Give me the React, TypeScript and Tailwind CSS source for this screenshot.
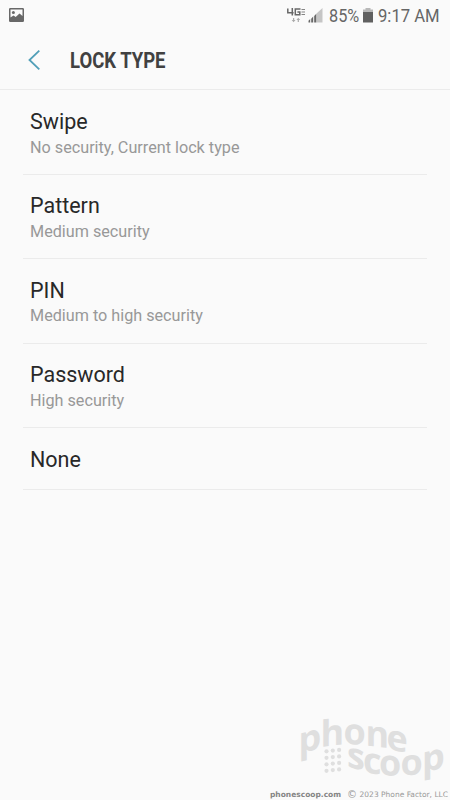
interface LockOption {
  title: string;
  summary?: string;
}

const OPTIONS: LockOption[] = [
  { title: "Swipe", summary: "No security, Current lock type" },
  { title: "Pattern", summary: "Medium security" },
  { title: "PIN", summary: "Medium to high security" },
  { title: "Password", summary: "High security" },
  { title: "None" },
];

// each letter sits on its own slanted baseline
const LOGO_LETTERS = [
  { char: "p", x: 298.5, y: 753.5, skew: -13 },
  { char: "h", x: 320.5, y: 747, skew: -7 },
  { char: "o", x: 343.5, y: 744, skew: 2 },
  { char: "n", x: 365.5, y: 745.5, skew: 6 },
  { char: "e", x: 386.5, y: 749, skew: 11 },
  { char: "s", x: 347, y: 766.5, skew: 14 },
  { char: "c", x: 363, y: 772, skew: 9 },
  { char: "o", x: 379, y: 775, skew: 3 },
  { char: "o", x: 400.5, y: 775.5, skew: -3 },
  { char: "p", x: 422, y: 772.5, skew: -12 },
];

function StatusBar() {
  return (
    <div className="flex h-8 items-center pl-[9px] text-[18.5px] leading-8 text-[#666]">
      <svg className="-mt-0.5 h-[14px] w-[15px]" viewBox="0 0 15 14">
        <path
          fill="#686868"
          fillRule="evenodd"
          d="M1.3 0h12.4Q15 0 15 1.3v11.4Q15 14 13.7 14H1.3Q0 14 0 12.7V1.3Q0 0 1.3 0ZM1.5 1.5V9.5l3-2 2.2 1.5 3.8-3.5 3 2.5v-6.5Z"
        />
        <circle cx="4.4" cy="4.4" r="1.5" fill="#686868" />
      </svg>
      <svg className="ml-[263px] h-8 w-[36px] shrink-0" viewBox="287 0 36 32">
        <path
          fill="none"
          stroke="#686868"
          strokeWidth="1.5"
          d="M287.8 8.5v4.2h5.8M292.3 8v7.5M300.5 9h-5.2v5.7h4.5v-2.6h-2.4"
        />
        <path fill="none" stroke="#858585" d="M301.5 9.5h3.5M301.5 12h3.5M301.5 14.5h3.5" />
        <path fill="#aaa" d="M293 18h1.2v2h1.3l-1.9 2.2-1.9-2.2h1.3ZM297.7 22h1.2v-2h1.3l-1.9-2.2-1.9 2.2h1.3Z" />
        <path fill="#c5c5c5" d="M316.5 13.5l6-5.5v14.5h-6Z" />
        <path fill="#686868" d="M308.5 20.8l1.7-1.8v3.5h-1.7ZM311.2 18.8l2-2.2v5.9h-2ZM314.2 16l2.1-2.2v8.7h-2.1Z" />
      </svg>
      <span className="ml-[6px] w-[31px] shrink-0">
        <span className="inline-block origin-left scale-x-[0.88]">85%</span>
      </span>
      <svg className="ml-[3px] h-8 w-[10px] shrink-0" viewBox="0 0 10 32">
        <path fill="#b8b8b8" d="M2.5 8h5v1.5H10V12H0V9.5h2.5Z" />
        <path fill="#606060" d="M0 12h10v10.5H0Z" />
      </svg>
      <span className="ml-[5px] w-[62px] shrink-0 whitespace-nowrap">
        <span className="inline-block origin-left scale-x-[0.9]">9:17 AM</span>
      </span>
    </div>
  );
}

function Header() {
  return (
    <header className="flex h-[58px] items-center border-b border-[#ebebeb] pl-[28px]">
      <svg className="-mt-px h-5 w-3" viewBox="0 0 12 20" fill="none" stroke="#519fb8" strokeWidth="1.8">
        <path d="M11.3.7 1.5 10l9.8 9.3" />
      </svg>
      <h1 className="ml-[30px] origin-left scale-x-[0.86] whitespace-nowrap pt-0.5 text-[21.5px] font-bold text-[#414141]">
        LOCK TYPE
      </h1>
    </header>
  );
}

function OptionRow({ option }: { option: LockOption }) {
  return (
    <li
      className={`border-b border-[#ebebeb] pl-[7px] pt-[17.3px] ${
        option.summary ? "h-[84.4px]" : "h-[61.4px]"
      }`}
    >
      <p className="text-[21.5px] leading-7 text-[#282828]">{option.title}</p>
      {option.summary && (
        <p className="mt-[0.7px] text-[16.2px] leading-[22px] text-[#989898]">{option.summary}</p>
      )}
    </li>
  );
}

function Watermark() {
  return (
    <footer className="flex flex-col items-end">
      <svg className="h-[72px] w-[150px] overflow-visible" viewBox="300 714 150 72">
        <g fill="#dfdfdf" className="font-['Open_Sans',sans-serif] text-[36px] font-bold">
          {LOGO_LETTERS.map((letter, i) => (
            <text key={i} transform={`translate(${letter.x} ${letter.y}) skewY(${letter.skew})`}>
              {letter.char}
            </text>
          ))}
          {[0, 1, 2, 3].map((row) =>
            [0, 1, 2].map((col) => (
              <circle key={`${row}-${col}`} cx={326.5 + col * 6.3} cy={751.3 + row * 6.5 - col * 0.7} r="2.1" />
            ))
          )}
        </g>
      </svg>
      <p className="flex h-[14px] items-center whitespace-nowrap pr-[2px] pt-[3px] font-['DejaVu_Sans',sans-serif] text-[7.5px] leading-[11px] text-[#999]">
        <b className="mr-[6px] text-[#858585]">phonescoop.com</b>
        <span className="mr-[2.5px] text-[10px]">©</span>
        <span>2023 Phone Factor, LLC</span>
      </p>
    </footer>
  );
}

export default function App() {
  return (
    <div className="flex h-[800px] w-[450px] flex-col overflow-hidden bg-[#fafafa] font-[Roboto,sans-serif]">
      <StatusBar />
      <Header />
      <ul className="ml-[23px] mr-[23px] flex-1 pt-[0.7px]">
        {OPTIONS.map((option) => (
          <OptionRow key={option.title} option={option} />
        ))}
      </ul>
      <Watermark />
    </div>
  );
}
